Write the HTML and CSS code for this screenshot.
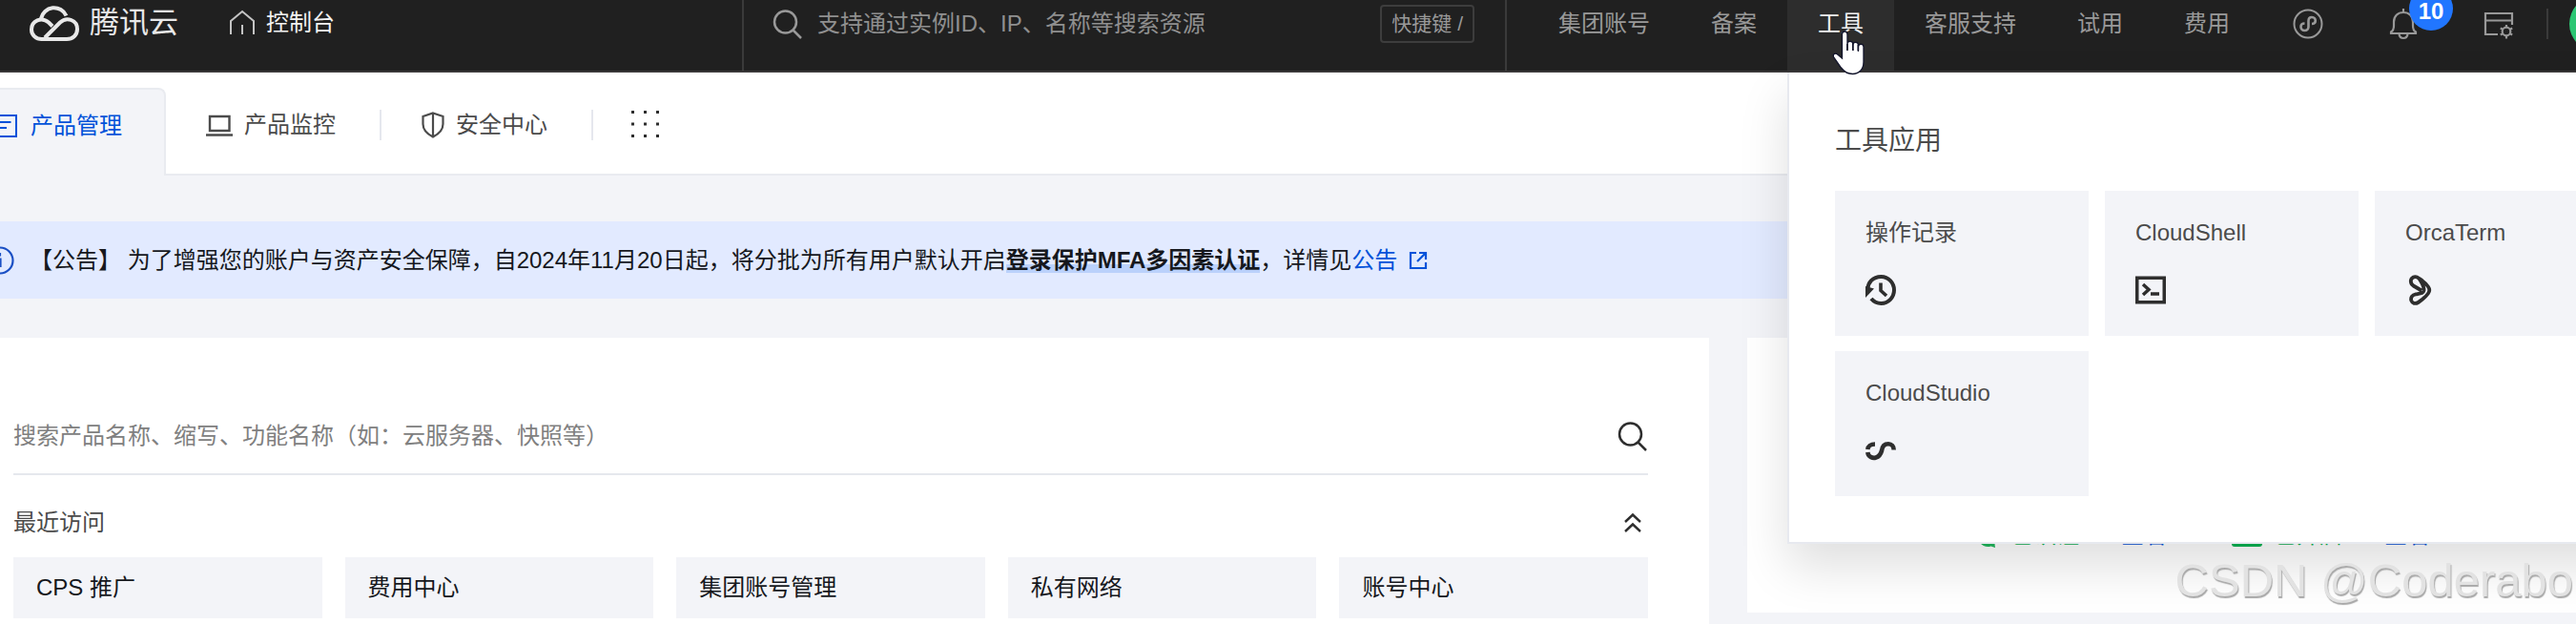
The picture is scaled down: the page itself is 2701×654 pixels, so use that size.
FILE: index.html
```html
<!DOCTYPE html>
<html lang="zh-CN">
<head>
<meta charset="utf-8">
<title>控制台</title>
<link rel="stylesheet" href="styles.css">
</head>
<body>
<div class="page">
  <header class="header">
    <div class="brand">
      <a class="logo" href="#">
        <svg width="52" height="38" viewBox="0 0 52 38" fill="none" stroke="currentColor" stroke-width="4"><path d="M12 14.500A14 14 0 0 1 38.500 11.500M24 22.500L20 18.500C12.500 12 2 17 2 26C2 32 7 36 12.500 36H39C45 36 50 32 50 25.500C50 16 39 12 32 18.500L16 34.500"/></svg>
        <span>腾讯云</span>
      </a>
      <a class="home" href="#">
        <svg width="28" height="28" viewBox="0 0 28 28" fill="none" stroke="currentColor" stroke-width="2"><path d="M2 26V12L14 2L26 12V26M14 16V26"/></svg>
        <span>控制台</span>
      </a>
    </div>
    <label class="global-search">
      <svg width="32" height="32" viewBox="0 0 32 32" fill="none" stroke="currentColor" stroke-width="2.500"><circle cx="13.500" cy="14" r="11.500"/><path d="M21.500 22.500L30 31"/></svg>
      <input type="text" placeholder="支持通过实例ID、IP、名称等搜索资源" aria-label="搜索资源">
      <kbd>快捷键 /</kbd>
    </label>
    <nav class="nav">
      <a class="nav-item" href="#">集团账号</a>
      <a class="nav-item" href="#">备案</a>
      <div class="nav-menu">
        <a class="nav-item nav-item-active" href="#">工具</a>
        <svg class="pointer" width="36" height="50" viewBox="0 0 36 50"><path d="M10.500 30V5.500C10.500 .8 16 .8 16 5.500V22V15C16 11.500 21.800 11.500 21.800 15V22V16C21.800 12.500 27.400 12.500 27.400 16V23V18C27.400 14.500 33 14.500 33 18V34C33 42 28 46.500 21.500 46.500C16 46.500 12.500 44 9.500 40L1.800 29C.2 25.800 3.500 23.800 6 26.300Z" fill="#fff" stroke="#11132a" stroke-width="1.300"/><path d="M16 15V22M21.800 15V22M27.400 16V22" stroke="#11132a" stroke-width="1.600"/></svg>
        <section class="dropdown">
          <h2>工具应用</h2>
          <div class="tools">
            <a class="tool" href="#"><span>操作记录</span>
              <svg width="32" height="32" viewBox="0 0 32 32" fill="none" stroke="currentColor" stroke-width="4"><path d="M2.500 17C1.500 8 8 2 16.500 2C24 2 30 8.500 30 16C30 23.500 24 30 16.500 30C12 30 8.500 28 6 25"/><path d="M16 8.500V16.500L22 22" stroke-width="3.600"/><path d="M0 12V24L9 14.500Z" fill="currentColor" stroke="none"/></svg></a>
            <a class="tool" href="#"><span>CloudShell</span>
              <svg width="32" height="32" viewBox="0 0 32 32" fill="none" stroke="currentColor" stroke-width="3.500"><path d="M1.750 3.250H30.250V28.750H1.750Z"/><path d="M8 10L14 15.500L8 21"/><path d="M16 20H25"/></svg></a>
            <a class="tool" href="#"><span>OrcaTerm</span>
              <svg width="32" height="32" viewBox="0 0 32 32" fill="none" stroke="currentColor" stroke-width="3.800" stroke-linejoin="round"><path d="M17 16.500L8.500 11.500C5 9 5 4.500 8 2.800C11 1.200 14 2.500 15.500 5.500C17.500 9 20 12.500 19.500 16.500C19 19.500 16 19.500 11 20.300C7 21 5.500 24 6.300 27C7.300 30 10.500 30.800 13.500 29C17.500 26.500 21.500 23 24 19.500C25.800 17 25.800 15 24 12.500C21.500 9 18 6 14.500 3.800"/></svg></a>
            <a class="tool" href="#"><span>CloudStudio</span>
              <svg width="32" height="32" viewBox="0 0 32 32" fill="none" stroke="currentColor" stroke-width="4.600"><path d="M10 9.500C5.500 9.500 2.500 12 2.300 15M2.300 18C3 23.500 8 24.500 11 23.500C14.500 22.500 16 20 17 16.500C17.500 12 20 9.300 24 9.300C27.500 9.300 29.700 12 29.700 15.500"/></svg></a>
          </div>
        </section>
      </div>
      <a class="nav-item" href="#">客服支持</a>
      <a class="nav-item" href="#">试用</a>
      <a class="nav-item" href="#">费用</a>
      <button class="icon-button" aria-label="小程序">
        <svg width="32" height="32" viewBox="0 0 32 32" fill="none" stroke="currentColor" stroke-width="2"><circle cx="16" cy="16" r="14.500"/><path stroke-width="2.600" d="M12.500 15.500C9.500 15.500 8.500 17.500 8.500 19C8.500 21 10 23 12.500 23C15 23 16.500 21 16.500 19V13C16.500 10.500 18 9 20 9C22.500 9 23.800 11 23.800 12.500C23.800 14.500 22.500 16 20 16"/></svg>
      </button>
      <button class="icon-button" aria-label="消息">
        <svg width="32" height="34" viewBox="0 0 32 34" fill="none" stroke="currentColor" stroke-width="2.200"><path d="M3 27H29V25.500C26.500 24 26 22.500 26 19V15C26 9 22 5 16 5C10 5 6 9 6 15V19C6 22.500 5.500 24 3 25.500ZM16 5V1M11.500 28C12 31 14 32 16 32C18 32 20 31 20.500 28"/></svg>
        <span class="badge">10</span>
      </button>
      <button class="icon-button" aria-label="设置">
        <svg width="32" height="32" viewBox="0 0 32 32" fill="none" stroke="currentColor" stroke-width="2.200"><path d="M15 27H2V5H30V17M2 12.500H30"/><circle cx="24" cy="24" r="4.300"/><path d="M24 17V20M24 28V31.500M17.800 20.500L20.500 22M27.500 26L30.200 27.500M17.800 27.500L20.500 26M27.500 22L30.200 20.500"/></svg>
      </button>
      <span class="nav-divider"></span>
      <button class="avatar" aria-label="账号"></button>
    </nav>
  </header>

  <nav class="tabs">
    <a class="tab tab-active" href="#">
      <svg width="28" height="24" viewBox="0 0 28 24" fill="none" stroke="currentColor" stroke-width="2"><path d="M1 1H27V23H1ZM6 8H21.500M6 14H17"/></svg>
      <span>产品管理</span>
    </a>
    <a class="tab" href="#">
      <svg width="28" height="24" viewBox="0 0 28 24" fill="none" stroke="currentColor" stroke-width="2.400"><path d="M4 3H24.500V18H4ZM0 22.500H28"/></svg>
      <span>产品监控</span>
    </a>
    <a class="tab" href="#">
      <svg width="24" height="28" viewBox="0 0 24 28" fill="none" stroke="currentColor" stroke-width="2.200"><path d="M12 1.500L22.500 5V13C22.500 19 18 23.500 12 26.500C6 23.500 1.500 19 1.500 13V5ZM12 1.500V26.500"/></svg>
      <span>安全中心</span>
    </a>
    <button class="more" aria-label="更多">
      <svg width="30" height="30" viewBox="0 0 30 30" fill="currentColor"><path d="M0 1h3v3h-3zM13 1h3v3h-3zM26 1h3v3h-3zM0 13.500h3v3h-3zM13 13.500h3v3h-3zM26 13.500h3v3h-3zM0 26h3v3h-3zM13 26h3v3h-3zM26 26h3v3h-3z"/></svg>
    </button>
  </nav>

  <div class="notice">
    <svg class="notice-icon" width="30" height="30" viewBox="0 0 30 30" fill="none" stroke="currentColor" stroke-width="2.200"><circle cx="15" cy="15" r="13.500"/><path d="M15 7V10.500M12 13.500H15.500V22"/></svg>
    <p>【公告】 为了增强您的账户与资产安全保障，自2024年11月20日起，将分批为所有用户默认开启<strong>登录保护MFA多因素认证</strong>，详情见<a href="#">公告</a></p>
    <svg class="external" width="20" height="20" viewBox="0 0 20 20" fill="none" stroke="currentColor" stroke-width="2.200"><path d="M8 2H2V18H18V12M11 2H18V9M18 2L9 11"/></svg>
  </div>

  <main class="main">
    <section class="card products">
      <label class="product-search">
        <input type="text" placeholder="搜索产品名称、缩写、功能名称（如：云服务器、快照等）" aria-label="搜索产品">
        <svg width="32" height="32" viewBox="0 0 32 32" fill="none" stroke="currentColor" stroke-width="2.500"><circle cx="13.500" cy="14" r="11.500"/><path d="M21.500 22.500L30 31"/></svg>
      </label>
      <div class="recent-head">
        <h3>最近访问</h3>
        <button aria-label="收起">
          <svg width="20" height="22" viewBox="0 0 20 22" fill="none" stroke="currentColor" stroke-width="2.400"><path d="M2 10L10 2.500L18 10M2 20L10 12.500L18 20"/></svg>
        </button>
      </div>
      <div class="recent">
        <a href="#">CPS 推广</a>
        <a href="#">费用中心</a>
        <a href="#">集团账号管理</a>
        <a href="#">私有网络</a>
        <a href="#">账号中心</a>
      </div>
    </section>
    <aside class="card account">
      <div class="status">
        <svg width="24" height="28" viewBox="0 0 24 28" fill="#21b85d"><path d="M12 2C19 2 23 8 23 14C23 19 21 22 19.500 23.500L20 27L15.500 25.500C8 28 1 21 1 14C1 8 5 2 12 2Z"/></svg>
        <span>已认证</span>
        <a href="#">查看</a>
      </div>
      <div class="status">
        <svg width="32" height="28" viewBox="0 0 32 28" fill="#0db353"><rect y="4" width="32" height="22" rx="3"/></svg>
        <span>已开启</span>
        <a href="#">查看</a>
      </div>
    </aside>
  </main>
  <div class="watermark">CSDN @Coderabo</div>
</div>
</body>
</html>
```
FILE: styles.css
```css
* {
  box-sizing: border-box;
}

body {
  margin: 0;
  font-family: "Liberation Sans", "Noto Sans CJK SC", sans-serif;
  font-size: 24px;
  line-height: 32px;
  color: #4b4b4b;
}

a {
  color: inherit;
  text-decoration: none;
}

h2, h3, p {
  margin: 0;
  font-weight: 400;
}

button {
  padding: 0;
  border: 0;
  background: none;
  color: inherit;
  font: inherit;
}

input {
  flex: 1;
  min-width: 0;
  padding: 0;
  border: 0;
  outline: 0;
  background: none;
  color: inherit;
  font: inherit;
}

svg {
  display: block;
  flex: none;
}

.page {
  position: relative;
  display: flex;
  flex-direction: column;
  min-height: 100vh;
  overflow: hidden;
  background: #f3f4f8;
}

/* Header */

.header {
  display: flex;
  border-bottom: 2px solid #3a3839;
  background: #202020;
  color: #999;
}

.brand {
  display: flex;
  flex: 0 0 778px;
  gap: 53px;
  padding: 0 0 26px 31px;
  color: #e8e8e8;
}

.logo, .home {
  display: flex;
  align-items: center;
  gap: 11px;
}

.logo {
  font-size: 31px;
}

.home {
  color: #f2f2f2;
}

.home svg {
  color: #c4c4c4;
}

.global-search {
  display: flex;
  flex: 1;
  align-items: center;
  gap: 15px;
  padding: 2px 32px 26px 30px;
  border: solid #3a3a3a;
  border-width: 0 2px;
}

.global-search input::placeholder {
  color: #8f8f8f;
  opacity: 1;
}

kbd {
  padding: 2px 10px;
  border: 2px solid #3d3d3d;
  border-radius: 4px;
  font-family: inherit;
  font-size: 21px;
}

.nav {
  display: flex;
  flex: none;
  padding-left: 22px;
}

.nav-item {
  display: block;
  padding: 9px 32px 33px;
}

.nav-item-active {
  background: #2d2d2d;
  color: #f2f2f2;
}

.nav-menu {
  position: relative;
}

.pointer {
  position: absolute;
  z-index: 3;
  left: 47px;
  top: 31px;
}

.icon-button {
  position: relative;
  display: flex;
  align-items: center;
  justify-content: center;
  width: 100px;
  height: 50px;
}

.badge {
  position: absolute;
  left: 56px;
  top: -14px;
  width: 46px;
  height: 46px;
  padding-top: 14px;
  border-radius: 23px;
  background: #2176ff;
  color: #fff;
  font-weight: 700;
  line-height: 24px;
}

.nav-divider {
  width: 2px;
  height: 32px;
  margin-top: 9px;
  background: #3a3a3a;
}

.avatar {
  width: 58px;
  height: 58px;
  margin: -4px -51px 0 22px;
  border-radius: 50%;
  background: #2cc673;
}

.dropdown {
  position: absolute;
  z-index: 2;
  left: 0;
  top: calc(100% + 2px);
  width: 930px;
  padding: 52px 32px 48px 48px;
  border: solid #e7e9ef;
  border-width: 0 0 2px 2px;
  background: #fff;
  box-shadow: 0 24px 48px rgba(0, 0, 0, 0.13);
  color: #4b4b4b;
}

.dropdown h2 {
  margin-bottom: 32px;
  font-size: 28px;
  line-height: 40px;
}

.tools {
  display: grid;
  grid-template-columns: repeat(3, 266px);
  gap: 16px 17px;
}

.tool {
  display: flex;
  flex-direction: column;
  gap: 28px;
  padding: 28px 32px 32px;
  background: #f3f4f8;
}

.tool svg {
  color: #2e2e2e;
}

/* Tabs */

.tabs {
  display: flex;
  height: 108px;
  border-bottom: 2px solid #e9ebf0;
  background: #fff;
}

.tab {
  position: relative;
  display: flex;
  align-items: center;
  gap: 12px;
  height: 32px;
  margin-top: 39px;
  padding: 0 46px 0 42px;
  border-right: 2px solid #e5e7ee;
}

.tab-active {
  height: 92px;
  margin: 16px 0 -2px -10px;
  padding: 0 44px 15px 0;
  border-top: 2px solid #e9ebf0;
  border-right-color: #e9ebf0;
  border-radius: 0 8px 0 0;
  background: #f3f4f8;
  color: #0052d9;
  gap: 14px;
}

.more {
  height: 32px;
  margin-top: 38px;
  padding: 0 40px;
  color: #2e2e2e;
}

/* Notice */

.notice {
  display: flex;
  align-items: center;
  margin-top: 48px;
  padding: 25px 0 24px;
  background: #e2eaff;
  color: #16181d;
}

.notice-icon {
  margin: 0 16px 0 -15px;
  color: #1a4fc4;
}

.notice strong {
  background: linear-gradient(#bad1fb, #bad1fb) 0 100% / 100% 9px no-repeat;
}

.notice a {
  color: #0052d9;
}

.external {
  margin-left: 12px;
  color: #0052d9;
}

/* Content */

.main {
  display: grid;
  flex: 1;
  grid-template-columns: minmax(0, 1792fr) minmax(0, 869fr);
  gap: 40px;
  margin-top: 41px;
}

.card {
  background: #fff;
}

.products {
  padding: 78px 64px 6px 14px;
}

.product-search {
  display: flex;
  align-items: center;
  padding-bottom: 14px;
  height: 66px;
  border-bottom: 2px solid #e5e8ed;
  color: #2e2e2e;
}

.product-search input::placeholder {
  color: #808080;
  opacity: 1;
}

.recent-head {
  display: flex;
  align-items: center;
  justify-content: space-between;
  padding: 34px 6px 20px 0;
}

.recent-head h3 {
  font-size: 24px;
}

.recent-head button {
  color: #2e2e2e;
}

.recent {
  display: grid;
  grid-template-columns: repeat(5, minmax(0, 1fr));
  gap: 24px;
}

.recent a {
  padding: 16px 24px;
  background: #f3f4f8;
  color: #16181d;
}

.account {
  display: flex;
  align-items: flex-end;
  gap: 68px;
  margin-bottom: 12px;
  padding: 0 0 65px 240px;
}

.status {
  display: flex;
  align-items: center;
  gap: 12px;
  color: #0db353;
}

.status a {
  margin-left: 32px;
  color: #0052d9;
}

.watermark {
  position: absolute;
  z-index: 4;
  right: 3px;
  bottom: 18px;
  color: #e2e2e2;
  font-size: 49px;
  line-height: 56px;
  text-shadow: 1px 2px 1px #a8a8a8;
}
```
